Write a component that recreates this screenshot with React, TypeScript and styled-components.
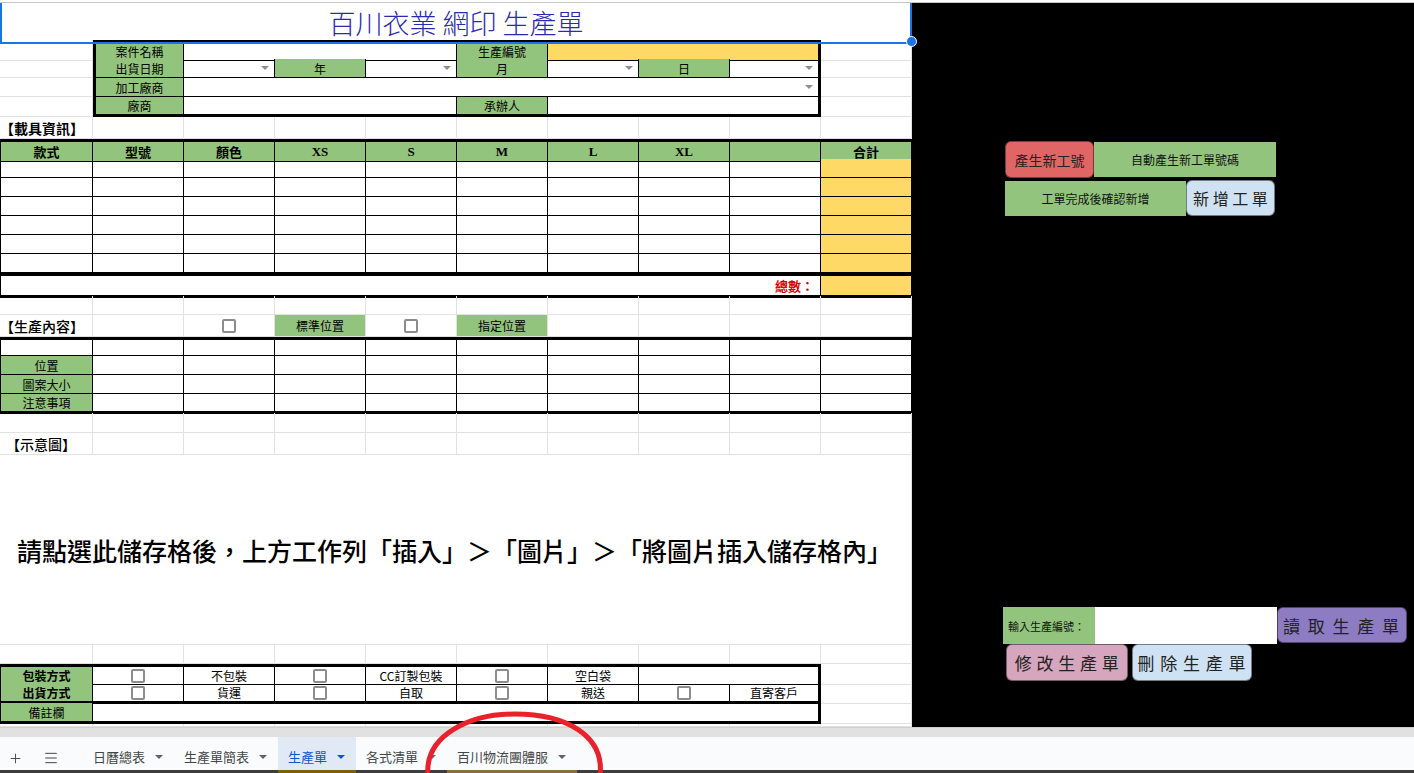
import React from 'react';
import styled, { createGlobalStyle } from 'styled-components';
import { Plus, Menu } from 'lucide-react';

const GRID = '#e2e2e2';
const GREEN = '#93c47d';
const YELLOW = '#ffd966';
const CJK = `"Noto Sans CJK TC", "Noto Sans", sans-serif`;

const GlobalStyle = createGlobalStyle`
  html, body { margin: 0; padding: 0; }
  body { font-family: ${CJK}; background: #fff; overflow: hidden; }
`;

const Page = styled.div`
  position: relative;
  width: 1414px;
  height: 773px;
  overflow: hidden;
  display: flex;
  flex-direction: column;
`;

const TopEdge = styled.div`
  height: 2px;
  background: #fff;
  border-bottom: 1px solid #c7c7c7;
`;

const Workspace = styled.div`
  display: flex;
  height: 724px;
`;

const Sheet = styled.div`
  width: 912px;
  flex-shrink: 0;
  display: flex;
  flex-direction: column;
  background: #fff;
`;

const Row = styled.div<{ $h: number }>`
  display: grid;
  grid-template-columns: 93px repeat(9, 91px);
  height: ${p => p.$h}px;
`;

type CellProps = {
  $span?: number;
  $bg?: string;
  $ink?: boolean;
  $t?: number;
  $b?: number;
  $l?: number;
  $r?: number;
  $align?: 'left' | 'center' | 'right';
  $size?: number;
  $weight?: number;
  $color?: string;
  $serif?: boolean;
  $pad?: number;
};

const justify: Record<string, string> = { left: 'flex-start', center: 'center', right: 'flex-end' };
const edge = (w?: number, ink?: boolean) => (w ? `${w}px solid #000` : `1px solid ${ink ? '#000' : GRID}`);

const Cell = styled.div<CellProps>`
  grid-column: span ${p => p.$span ?? 1};
  box-sizing: border-box;
  display: flex;
  align-items: center;
  justify-content: ${p => justify[p.$align ?? 'center']};
  padding: 0 ${p => p.$pad ?? 4}px;
  white-space: nowrap;
  background: ${p => p.$bg ?? 'transparent'};
  font-family: ${p => (p.$serif ? `"Liberation Serif", ${CJK}` : CJK)};
  font-size: ${p => p.$size ?? 12}px;
  font-weight: ${p => p.$weight ?? 400};
  color: ${p => p.$color ?? '#000'};
  border-top: ${p => (p.$t ? `${p.$t}px solid #000` : 'none')};
  border-left: ${p => (p.$l ? `${p.$l}px solid #000` : 'none')};
  border-right: ${p => edge(p.$r, p.$ink)};
  border-bottom: ${p => edge(p.$b, p.$ink)};
`;

const TitleCell = styled(Cell)`
  position: relative;
  border: 2px solid #1a73e8;
  border-top: 0;
  font-size: 27px;
  font-weight: 300;
  color: #2a2ab0;
`;

const Handle = styled.span`
  position: absolute;
  right: -7px;
  bottom: -5px;
  width: 9px;
  height: 9px;
  border-radius: 50%;
  background: #1a73e8;
  border: 1px solid #fff;
  z-index: 2;
`;

const Caret = styled.span<{ $color?: string }>`
  width: 0;
  height: 0;
  border-left: 4px solid transparent;
  border-right: 4px solid transparent;
  border-top: 4px solid ${p => p.$color ?? '#8f8f8f'};
`;

const Check = styled.span`
  width: 14px;
  height: 14px;
  box-sizing: border-box;
  border: 2px solid #8c8c8c;
  border-radius: 2px;
  background: #fff;
`;

const Panel = styled.div`
  flex: 1;
  background: #000;
  display: flex;
  flex-direction: column;
  justify-content: space-between;
  padding: 138px 0 46px 91px;
`;

const Cluster = styled.div<{ $gap?: number; $indent?: number }>`
  display: flex;
  flex-direction: column;
  gap: ${p => p.$gap ?? 0}px;
  margin-left: ${p => p.$indent ?? 0}px;
`;

const Line = styled.div<{ $gap?: number; $indent?: number; $top?: boolean }>`
  display: flex;
  align-items: ${p => (p.$top ? 'flex-start' : 'center')};
  gap: ${p => p.$gap ?? 0}px;
  margin-left: ${p => p.$indent ?? 0}px;
`;

const Note = styled.div<{ $w: number; $h: number; $size?: number; $left?: boolean; $bg?: string }>`
  width: ${p => p.$w}px;
  height: ${p => p.$h}px;
  box-sizing: border-box;
  display: flex;
  align-items: center;
  justify-content: ${p => (p.$left ? 'flex-start' : 'center')};
  padding-left: ${p => (p.$left ? 5 : 0)}px;
  background: ${p => p.$bg ?? GREEN};
  font-size: ${p => p.$size ?? 12}px;
  color: #111;
  white-space: nowrap;
`;

const Action = styled.div<{ $bg: string; $w: number; $h: number; $size: number; $spacing?: number }>`
  width: ${p => p.$w}px;
  height: ${p => p.$h}px;
  box-sizing: border-box;
  display: flex;
  align-items: center;
  justify-content: center;
  background: ${p => p.$bg};
  border: 1px solid rgba(0, 0, 0, 0.45);
  border-radius: 6px;
  font-size: ${p => p.$size}px;
  letter-spacing: ${p => p.$spacing ?? 0}px;
  color: #222;
  white-space: pre;
`;

const Scroll = styled.div`
  height: 10px;
  box-sizing: border-box;
  background: #e1e1e1;
  border-top: 1px solid #d0d0d0;
`;

const TabBar = styled.div`
  height: 36px;
  display: flex;
  align-items: stretch;
  background: linear-gradient(to top, #3d3d3d 3px, #f9fbfd 3px);
`;

const Tool = styled.div<{ $ml?: number; $mr?: number }>`
  width: 30px;
  display: flex;
  align-items: center;
  justify-content: center;
  padding-top: 6px;
  box-sizing: border-box;
  margin: 0 ${p => p.$mr ?? 0}px 0 ${p => p.$ml ?? 0}px;
  color: #444746;
`;

const Tab = styled.div<{ $active?: boolean; $bar?: string }>`
  display: flex;
  align-items: center;
  gap: 10px;
  padding: 6px 11px 0 10px;
  box-sizing: border-box;
  font-size: 13px;
  white-space: nowrap;
  color: ${p => (p.$active ? '#0b57d0' : '#444746')};
  background: ${p => (p.$active ? '#e1e9f7' : 'transparent')};
  border-bottom: 3px solid ${p => p.$bar ?? 'transparent'};
`;

const Annotation = styled.svg`
  position: absolute;
  left: 415px;
  top: 705px;
  width: 200px;
  height: 68px;
  pointer-events: none;
`;

const blanks = (n: number, key: string) =>
  Array.from({ length: n }, (_, i) => <Cell key={`${key}-${i}`} />);

const Pick = ({ span, r }: { span?: number; r?: number }) => (
  <Cell $span={span} $ink $r={r} $align="right" $pad={5}>
    <Caret />
  </Cell>
);

const heads = ['款式', '型號', '顏色', 'XS', 'S', 'M', 'L', 'XL', '', '合計'];
const spots = ['位置', '圖案大小', '注意事項'];

const App = () => {
  return (
    <>
      <GlobalStyle />
      <Page>
        <TopEdge />
        <Workspace>
          <Sheet>
            <Row $h={37}>
              <TitleCell $span={10}>
                百川衣業 網印 生產單
                <Handle />
              </TitleCell>
            </Row>
            <Row $h={19}>
              <Cell />
              <Cell $bg={GREEN} $ink $t={3} $l={3}>案件名稱</Cell>
              <Cell $span={3} $ink $t={3} />
              <Cell $bg={GREEN} $ink $t={3}>生產編號</Cell>
              <Cell $span={3} $bg={YELLOW} $ink $t={3} $r={3} />
              <Cell />
            </Row>
            <Row $h={19}>
              <Cell />
              <Cell $bg={GREEN} $ink $l={3}>出貨日期</Cell>
              <Pick />
              <Cell $bg={GREEN} $ink>年</Cell>
              <Pick />
              <Cell $bg={GREEN} $ink>月</Cell>
              <Pick />
              <Cell $bg={GREEN} $ink>日</Cell>
              <Pick r={3} />
              <Cell />
            </Row>
            <Row $h={19}>
              <Cell />
              <Cell $bg={GREEN} $ink $l={3}>加工廠商</Cell>
              <Pick span={7} r={3} />
              <Cell />
            </Row>
            <Row $h={20}>
              <Cell />
              <Cell $bg={GREEN} $ink $l={3} $b={3}>廠商</Cell>
              <Cell $span={3} $ink $b={3} />
              <Cell $bg={GREEN} $ink $b={3}>承辦人</Cell>
              <Cell $span={3} $ink $b={3} $r={3} />
              <Cell />
            </Row>
            <Row $h={22}>
              <Cell $align="left" $pad={0} $size={14} $weight={700}>【載具資訊】</Cell>
              {blanks(9, 'r6')}
            </Row>
            <Row $h={20}>
              {heads.map((h, i) => (
                <Cell key={i} $bg={GREEN} $ink $t={3} $l={i === 0 ? 1 : undefined} $serif $weight={700} $size={13}>
                  {h}
                </Cell>
              ))}
            </Row>
            {[0, 1, 2, 3, 4, 5].map(r => (
              <Row key={r} $h={19}>
                {heads.map((_, i) => (
                  <Cell key={i} $ink $l={i === 0 ? 1 : undefined} $bg={i === 9 ? YELLOW : undefined} />
                ))}
              </Row>
            ))}
            <Row $h={23}>
              <Cell $span={9} $ink $t={3} $b={3} $l={1} $align="right" $pad={6} $color="#e00000" $weight={700} $size={13}>
                總數：
              </Cell>
              <Cell $bg={YELLOW} $ink $t={3} $b={3} />
            </Row>
            <Row $h={19}>{blanks(10, 'r15')}</Row>
            <Row $h={22}>
              <Cell $align="left" $pad={0} $size={14} $weight={500}>【生產內容】</Cell>
              <Cell />
              <Cell><Check /></Cell>
              <Cell $bg={GREEN}>標準位置</Cell>
              <Cell><Check /></Cell>
              <Cell $bg={GREEN}>指定位置</Cell>
              {blanks(4, 'r16')}
            </Row>
            <Row $h={19}>
              {heads.map((_, i) => (
                <Cell key={i} $ink $t={3} $l={i === 0 ? 1 : undefined} />
              ))}
            </Row>
            {spots.map((s, r) => (
              <Row key={s} $h={19}>
                <Cell $bg={GREEN} $ink $l={1} $b={r === 2 ? 3 : undefined}>{s}</Cell>
                {heads.slice(1).map((_, i) => (
                  <Cell key={i} $ink $b={r === 2 ? 3 : undefined} />
                ))}
              </Row>
            ))}
            <Row $h={20}>{blanks(10, 'r21')}</Row>
            <Row $h={22}>
              <Cell $align="left" $pad={6} $size={14} $weight={500}>【示意圖】</Cell>
              {blanks(9, 'r22')}
            </Row>
            <Row $h={190}>
              <Cell $span={10} $align="left" $pad={17} $size={25} $weight={500}>
                請點選此儲存格後，上方工作列「插入」＞「圖片」＞「將圖片插入儲存格內」
              </Cell>
            </Row>
            <Row $h={19}>{blanks(10, 'r24')}</Row>
            <Row $h={20}>
              <Cell $bg={GREEN} $ink $t={3} $l={1} $weight={700}>包裝方式</Cell>
              <Cell $ink $t={3}><Check /></Cell>
              <Cell $ink $t={3}>不包裝</Cell>
              <Cell $ink $t={3}><Check /></Cell>
              <Cell $ink $t={3}>CC訂製包裝</Cell>
              <Cell $ink $t={3}><Check /></Cell>
              <Cell $ink $t={3}>空白袋</Cell>
              <Cell $span={2} $ink $t={3} $r={3} />
              <Cell />
            </Row>
            <Row $h={19}>
              <Cell $bg={GREEN} $ink $l={1} $b={3} $weight={700}>出貨方式</Cell>
              <Cell $ink $b={3}><Check /></Cell>
              <Cell $ink $b={3}>貨運</Cell>
              <Cell $ink $b={3}><Check /></Cell>
              <Cell $ink $b={3}>自取</Cell>
              <Cell $ink $b={3}><Check /></Cell>
              <Cell $ink $b={3}>親送</Cell>
              <Cell $ink $b={3}><Check /></Cell>
              <Cell $ink $b={3} $r={3}>直寄客戶</Cell>
              <Cell />
            </Row>
            <Row $h={21}>
              <Cell $bg={GREEN} $ink $l={1} $b={3}>備註欄</Cell>
              <Cell $span={8} $ink $b={3} $r={3} />
              <Cell />
            </Row>
            <Row $h={3}>{blanks(10, 'r28')}</Row>
          </Sheet>

          <Panel>
            <Cluster $gap={2} $indent={2}>
              <Line>
                <Action $bg="#e06666" $w={89} $h={37} $size={14}>產生新工號</Action>
                <Note $w={182} $h={35}>自動產生新工單號碼</Note>
              </Line>
              <Line>
                <Note $w={181} $h={35}>工單完成後確認新增</Note>
                <Action $bg="#cfe2f3" $w={89} $h={36} $size={16}>新 增 工 單</Action>
              </Line>
            </Cluster>
            <Cluster>
              <Line $top>
                <Note $w={92} $h={37} $size={11} $left>輸入生產編號：</Note>
                <Note $w={182} $h={37} $bg="#fff" />
                <Action $bg="#8e7cc3" $w={130} $h={36} $size={17} $spacing={2}>讀 取 生 產 單</Action>
              </Line>
              <Line $gap={4} $indent={3}>
                <Action $bg="#d5a6bd" $w={122} $h={37} $size={17} $spacing={0.5}>修 改 生 產 單</Action>
                <Action $bg="#cfe2f3" $w={120} $h={37} $size={17} $spacing={1}>刪 除 生 產 單</Action>
              </Line>
            </Cluster>
          </Panel>
        </Workspace>

        <Scroll />
        <TabBar>
          <Tool><Plus size={15} strokeWidth={1.5} /></Tool>
          <Tool $ml={6} $mr={17}><Menu size={16} strokeWidth={1.5} /></Tool>
          <Tab>日曆總表<Caret $color="#5f6368" /></Tab>
          <Tab>生產單簡表<Caret $color="#5f6368" /></Tab>
          <Tab $active $bar="#7f6000">生產單<Caret $color="#0b57d0" /></Tab>
          <Tab>各式清單<Caret $color="#5f6368" /></Tab>
          <Tab $bar="#8d6e3a">百川物流團體服<Caret $color="#5f6368" /></Tab>
        </TabBar>

        <Annotation viewBox="415 705 200 68">
          <path
            d="M428 776 C424 735 470 714 515 714 C565 714 605 735 600 776"
            fill="none"
            stroke="#e8212a"
            strokeWidth={5}
            strokeLinecap="round"
          />
        </Annotation>
      </Page>
    </>
  );
};

export default App;
